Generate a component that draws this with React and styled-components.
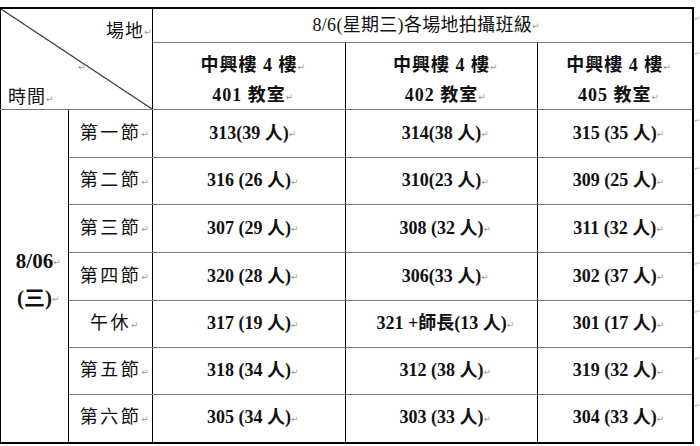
import React from "react";
import styled, { createGlobalStyle } from "styled-components";

const GlobalStyle = createGlobalStyle`
    html, body {
        margin: 0;
        padding: 0;
        background: #ffffff;
    }
    body {
        font-family: "Liberation Serif", "Noto Sans CJK TC", serif;
        color: #111;
    }
`;

const Page = styled.div`
    width: 700px;
    height: 446px;
    padding-top: 7px;
    box-sizing: border-box;
    overflow: hidden;
`;

const Table = styled.table`
    border-collapse: collapse;
    table-layout: fixed;
    width: 700px;
`;

const Cell = styled.td`
    border-left: 1px solid #000;
    border-right: 1px solid #000;
    border-top: ${(p) => (p.$topEdge ? "2px solid #000" : "1.5px solid #7a7a7a")};
    border-bottom: ${(p) => (p.$bottomEdge ? "2px solid #000" : "1.5px solid #7a7a7a")};
    ${(p) => p.$leftEdge && "border-left: 1.5px solid #000;"}
    ${(p) => p.$rightEdge && "border-right: 2px solid #000;"}
    padding: 0;
    text-align: center;
    vertical-align: ${(p) => p.$valign || "middle"};
    font-size: 18px;
    font-weight: ${(p) => (p.$bold ? 700 : 400)};
    letter-spacing: ${(p) => p.$spacing || "0px"};
    line-height: 1.2;
    white-space: nowrap;
`;

const EndCell = styled.td`
    border: none;
    padding: 2px 0 0 1px;
    vertical-align: top;
    text-align: left;
    line-height: 12px;
`;

const Mark = styled.span`
    display: inline-block;
    width: 0;
    font-size: 9px;
    font-weight: 400;
    letter-spacing: 0;
    color: #9a9a9a;
    vertical-align: middle;
    font-family: "DejaVu Sans", sans-serif;
`;

const RowMark = styled.span`
    font-size: 7px;
    color: #a8a8a8;
    font-family: "DejaVu Sans", sans-serif;
`;

const CornerCell = styled(Cell)`
    position: relative;
    border-bottom: 1.5px solid #7a7a7a;
`;

const CornerLayout = styled.div`
    position: relative;
    height: 100px;
    display: flex;
    flex-direction: column;
    justify-content: space-between;
    padding: 12px 4px 0 7px;
    box-sizing: border-box;
    font-size: 18px;
    letter-spacing: 1px;
`;

const CornerTop = styled.div`
    text-align: right;
    padding-right: 4px;
`;

const CornerMid = styled.div`
    text-align: left;
    padding-left: 70px;
    height: 0;
    line-height: 0;
`;

const CornerBottom = styled.div`
    text-align: left;
    padding-bottom: 0;
`;

const Diagonal = styled.svg`
    position: absolute;
    left: 0;
    top: 0;
    width: 100%;
    height: 100%;
    pointer-events: none;
`;

const HeadBlock = styled.div`
    display: flex;
    flex-direction: column;
    gap: 4px;
    padding-top: 9px;
`;

const HeadLine = styled.div`
    height: 26px;
    line-height: 26px;
`;

const DateBlock = styled.div`
    display: flex;
    flex-direction: column;
    align-items: center;
    padding-top: 8px;
`;

const DateLine = styled.div`
    height: 37px;
    line-height: 37px;
    font-size: 21px;
`;

const rooms = [
    { floor: "中興樓 4 樓", room: "401 教室" },
    { floor: "中興樓 4 樓", room: "402 教室" },
    { floor: "中興樓 4 樓", room: "405 教室" },
];

const rows = [
    { period: "第一節", h: 48, classes: ["313(39 人)", "314(38 人)", "315 (35 人)"] },
    { period: "第二節", h: 47, classes: ["316 (26 人)", "310(23 人)", "309 (25 人)"] },
    { period: "第三節", h: 48, classes: ["307 (29 人)", "308 (32 人)", "311 (32 人)"] },
    { period: "第四節", h: 48, classes: ["320 (28 人)", "306(33 人)", "302 (37 人)"] },
    { period: "午休", h: 47, classes: ["317 (19 人)", "321 +師長(13 人)", "301 (17 人)"] },
    { period: "第五節", h: 47, classes: ["318 (34 人)", "312 (38 人)", "319 (32 人)"] },
    { period: "第六節", h: 48, classes: ["305 (34 人)", "303 (33 人)", "304 (33 人)"] },
];

const M = () => <Mark>↵</Mark>;

const App = () => {
    const last = rows.length - 1;
    return (
        <Page>
            <GlobalStyle />
            <Table>
                <colgroup>
                    <col style={{ width: 68 }} />
                    <col style={{ width: 84 }} />
                    <col style={{ width: 193 }} />
                    <col style={{ width: 192 }} />
                    <col style={{ width: 155 }} />
                    <col style={{ width: 8 }} />
                </colgroup>
                <tbody>
                    <tr style={{ height: 34 }}>
                        <CornerCell colSpan={2} rowSpan={2} $topEdge $leftEdge>
                            <Diagonal viewBox="0 0 152 100" preserveAspectRatio="none">
                                <line x1="0" y1="0" x2="152" y2="100" stroke="#3a3a3a" strokeWidth="1.2" />
                            </Diagonal>
                            <CornerLayout>
                                <CornerTop>場地<M /></CornerTop>
                                <CornerMid><M /></CornerMid>
                                <CornerBottom>時間<M /></CornerBottom>
                            </CornerLayout>
                        </CornerCell>
                        <Cell colSpan={3} $topEdge $rightEdge $spacing="0.3px">
                            8/6(星期三)各場地拍攝班級<M />
                        </Cell>
                        <EndCell><RowMark>↵</RowMark></EndCell>
                    </tr>
                    <tr style={{ height: 66 }}>
                        {rooms.map((r, i) => (
                            <Cell
                                key={i}
                                $bold
                                $valign="top"
                                $spacing="1px"
                                $rightEdge={i === rooms.length - 1}
                            >
                                <HeadBlock>
                                    <HeadLine>{r.floor}<M /></HeadLine>
                                    <HeadLine>{r.room}<M /></HeadLine>
                                </HeadBlock>
                            </Cell>
                        ))}
                        <EndCell><RowMark>↵</RowMark></EndCell>
                    </tr>
                    {rows.map((row, ri) => (
                        <tr key={ri} style={{ height: row.h }}>
                            {ri === 0 && (
                                <Cell rowSpan={rows.length} $bold $leftEdge $bottomEdge>
                                    <DateBlock>
                                        <DateLine>8/06<M /></DateLine>
                                        <DateLine>(三)<M /></DateLine>
                                    </DateBlock>
                                </Cell>
                            )}
                            <Cell $spacing="2.5px" $bottomEdge={ri === last}>
                                {row.period}<M />
                            </Cell>
                            {row.classes.map((c, ci) => (
                                <Cell
                                    key={ci}
                                    $bold
                                    $bottomEdge={ri === last}
                                    $rightEdge={ci === row.classes.length - 1}
                                >
                                    {c}<M />
                                </Cell>
                            ))}
                            <EndCell><RowMark>↵</RowMark></EndCell>
                        </tr>
                    ))}
                </tbody>
            </Table>
        </Page>
    );
};

export default App;
